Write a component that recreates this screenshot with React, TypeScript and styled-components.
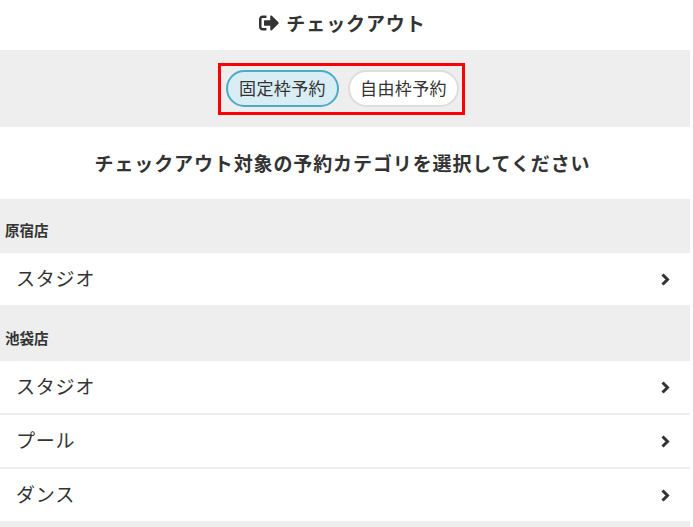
import React from "react";
import styled, { createGlobalStyle } from "styled-components";
import { FaSignOutAlt } from "react-icons/fa";

const Global = createGlobalStyle`
  html, body { margin: 0; padding: 0; background: #fff; }
  body { font-family: "Noto Sans CJK JP", "Noto Sans", sans-serif; color: #333; }
`;

const Page = styled.div`
  width: 690px;
  height: 527px;
  overflow: hidden;
  background: #eee;
`;

const Header = styled.h1`
  margin: 0;
  box-sizing: border-box;
  height: 50px;
  padding: 0 5px 5px 0;
  background: #fff;
  display: flex;
  align-items: center;
  justify-content: center;
  gap: 7px;
  font-size: 19px;
  font-weight: 700;
  letter-spacing: 0.9px;
  color: #333;
  svg { width: 20px; height: 20px; }
`;

const TabBar = styled.div`
  height: 77px;
  display: flex;
  align-items: center;
  justify-content: center;
`;

const TabFrame = styled.div`
  box-sizing: border-box;
  width: 247px;
  height: 52px;
  margin-left: -7px;
  padding-left: 2px;
  border: 3px solid #f00;
  display: flex;
  align-items: center;
  justify-content: center;
  gap: 9px;
`;

const Pill = styled.button<{ $active?: boolean }>`
  box-sizing: border-box;
  height: 37px;
  width: ${(p) => (p.$active ? "113px" : "111px")};
  padding: 0 0 3px;
  border-radius: 19px;
  border: 2px solid ${(p) => (p.$active ? "#4bacc6" : "#ddd")};
  background: ${(p) => (p.$active ? "#d9edf5" : "#fff")};
  font-family: inherit;
  font-size: 17px;
  font-weight: 400;
  letter-spacing: 0.4px;
  color: #333;
`;

const Title = styled.h2`
  margin: 0;
  box-sizing: border-box;
  height: 72px;
  padding: 0 5px 2px 0;
  background: #fff;
  display: flex;
  align-items: center;
  justify-content: center;
  font-size: 19px;
  font-weight: 700;
  letter-spacing: 0.88px;
  color: #333;
`;

const SectionLabel = styled.div`
  height: 54px;
  box-sizing: border-box;
  padding: 21px 0 0 5px;
  font-size: 14.5px;
  line-height: 20px;
  font-weight: 700;
  color: #333;
`;

const Row = styled.a`
  box-sizing: border-box;
  height: 52px;
  margin-bottom: 2px;
  padding: 0 20px 3px 16px;
  background: #fff;
  display: flex;
  align-items: center;
  justify-content: space-between;
  font-size: 19px;
  letter-spacing: 0.8px;
  color: #333;
`;

const Chevron = styled.svg`
  width: 9px;
  height: 13px;
  margin-top: 3px;
  fill: none;
  stroke: #333;
  stroke-width: 3;
`;

const Section = styled.section``;

const sections = [
  { name: "原宿店", items: ["スタジオ"] },
  { name: "池袋店", items: ["スタジオ", "プール", "ダンス"] },
];

export default function App() {
  return (
    <Page>
      <Global />
      <Header>
        <FaSignOutAlt />
        チェックアウト
      </Header>
      <TabBar>
        <TabFrame>
          <Pill $active>固定枠予約</Pill>
          <Pill>自由枠予約</Pill>
        </TabFrame>
      </TabBar>
      <Title>チェックアウト対象の予約カテゴリを選択してください</Title>
      {sections.map((s) => (
        <Section key={s.name}>
          <SectionLabel>{s.name}</SectionLabel>
          {s.items.map((item) => (
            <Row key={item}>
              {item}
              <Chevron viewBox="0 0 9 13">
                <polyline points="1.5,1.5 6.5,6.5 1.5,11.5" />
              </Chevron>
            </Row>
          ))}
        </Section>
      ))}
    </Page>
  );
}
